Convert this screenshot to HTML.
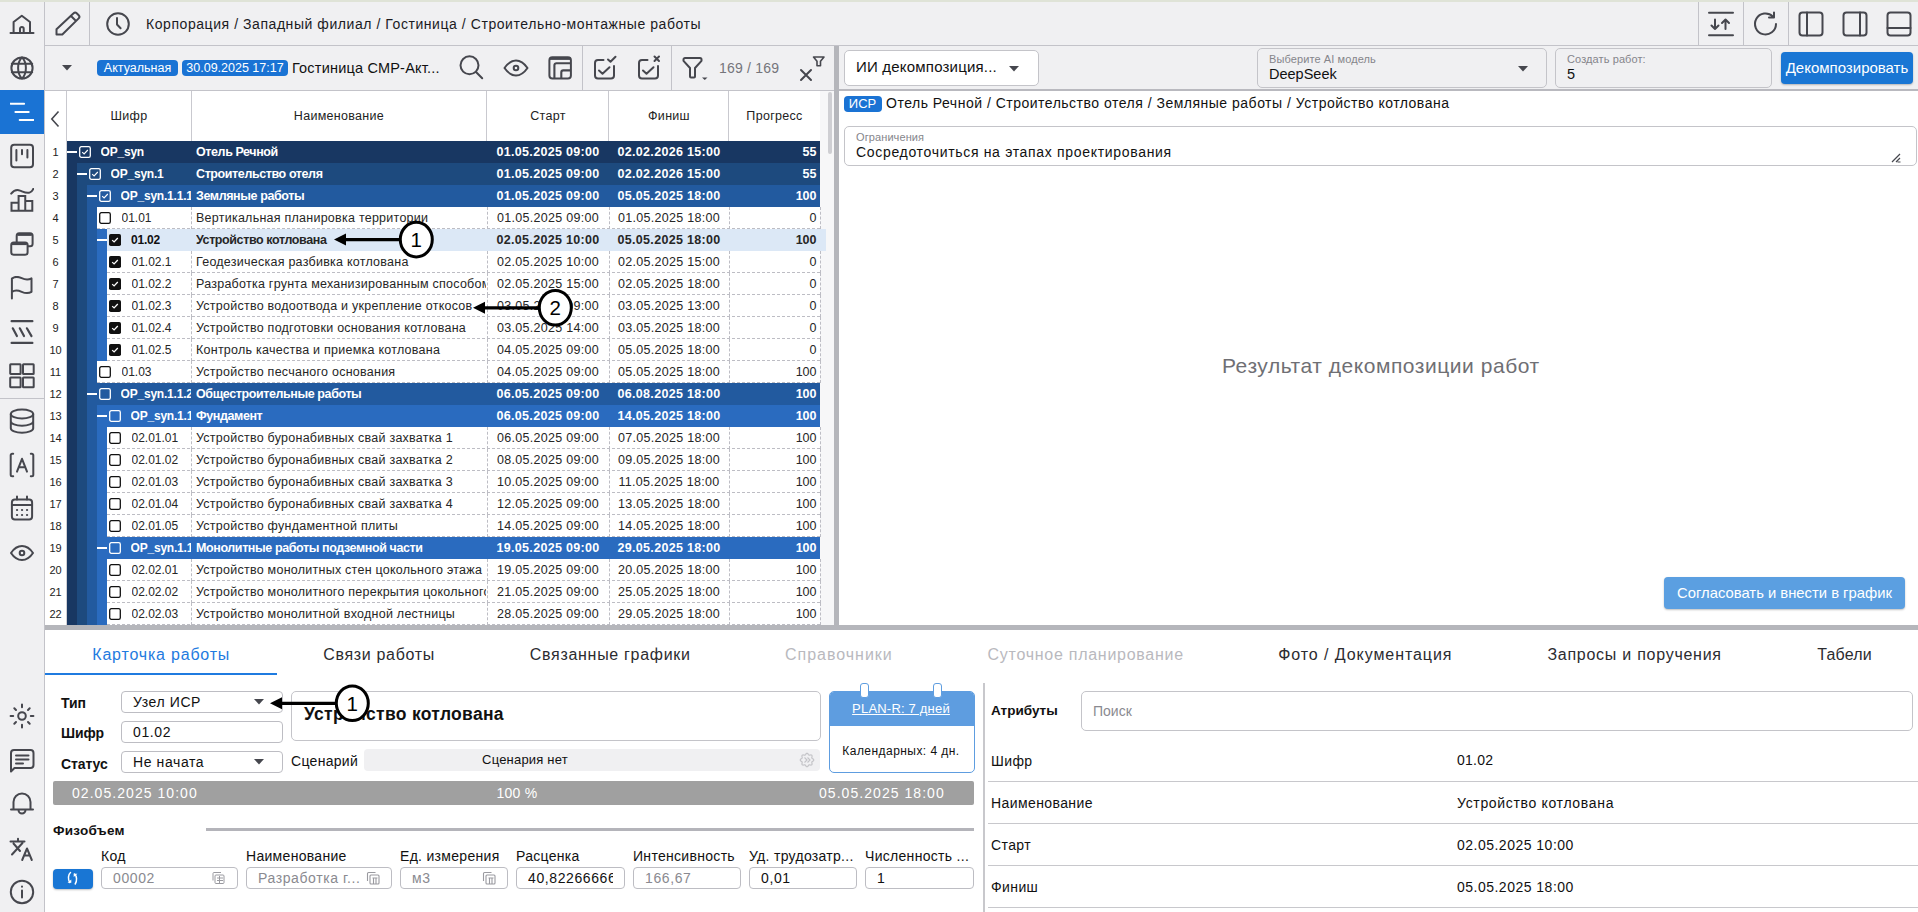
<!DOCTYPE html>
<html><head><meta charset="utf-8">
<style>
*{box-sizing:border-box;margin:0;padding:0}
html,body{width:1918px;height:912px;overflow:hidden;background:#f0f0f2;font-family:"Liberation Sans",sans-serif;color:#111}
.abs{position:absolute}
.t{white-space:nowrap;line-height:16px}
.b{font-weight:bold}
#topstrip{position:absolute;left:0;top:0;width:1918px;height:2px;background:#dfe3d7}
#side{position:absolute;left:0;top:2px;width:45px;height:910px;background:#f0f0f2;border-right:1px solid #c3c3c9}
#hdr{position:absolute;left:45px;top:2px;width:1873px;height:44px;border-bottom:1px solid #c3c3c9;background:#f0f0f2}
.vsep{position:absolute;width:1px;background:#c3c3c9}
.crumb{position:absolute;left:146px;top:16px;font-size:14px;letter-spacing:0.56px;color:#1b1b1f;white-space:nowrap}
#tb{position:absolute;left:45px;top:46px;width:789px;height:45px;border-bottom:1px solid #c3c3c9;background:#f0f0f2}
.badge{position:absolute;top:60px;height:16px;background:#1a73d4;color:#fff;border-radius:4px;font-size:12.5px;line-height:16px;text-align:center;white-space:nowrap}
#thead{position:absolute;left:45px;top:91px;width:789px;height:534px;background:#fff}
.th{position:absolute;top:91px;height:50px;line-height:50px;font-size:12.5px;text-align:center;color:#222;letter-spacing:0.3px}
.thb{position:absolute;top:91px;width:1px;height:50px;background:#c9c9cf}
.rn{position:absolute;left:45px;width:21px;height:22px;line-height:22px;font-size:11px;text-align:center;color:#222}
.stripe{position:absolute;width:10px;height:22px}
.row{position:absolute;height:22px}
.leaf{background:#fff;border-bottom:1px dashed #bdbdc4;color:#262626}
.sel{background:#dce8f6}
.dash{position:absolute;left:0;top:10px;width:10px;height:2px;background:#fff}
.cb{position:absolute;top:5px;width:12px;height:12px;line-height:0}
.code{position:absolute;top:0;height:22px;line-height:22px;font-size:12px;white-space:nowrap;overflow:hidden;letter-spacing:0}
.code.b{letter-spacing:-0.2px}
.grp .code{color:#fff}
.cell{position:absolute;height:22px;line-height:22px;font-size:12.5px;white-space:nowrap;overflow:hidden}
.nm.b{letter-spacing:-0.4px}
.vd{position:absolute;width:0;height:22px;border-left:1px dashed #bdbdc4}
.nm{left:196px;width:290px;letter-spacing:0.25px}
.st{left:487px;width:122px;text-align:center;letter-spacing:0.3px}
.fi{left:609px;width:120px;text-align:center;letter-spacing:0.3px}
.pr{left:729px;width:87.5px;text-align:right}
#split-v{position:absolute;left:834px;top:46px;width:5px;height:580px;background:#b5b6bb}
#split-h{position:absolute;left:45px;top:625px;width:1873px;height:5px;background:#b5b6bb}
#scroll{position:absolute;left:820px;top:91px;width:14px;height:534px;background:#f7f7f8}
#thumb{position:absolute;left:828px;top:92px;width:4px;height:62px;background:#cfcfd3;border-radius:2px}
#rtb{position:absolute;left:839px;top:46px;width:1079px;height:45px;background:#f0f0f2;border-bottom:2px solid #b9b9bf}
#rbody{position:absolute;left:839px;top:91px;width:1079px;height:534px;background:#fff}
.box{border:1px solid #c4c4c9;border-radius:5px}
.lbl{font-size:11px;color:#85858b;letter-spacing:0.1px}
.btn{background:#1976d4;color:#fff;border-radius:4px;text-align:center;white-space:nowrap;box-shadow:0 1px 2px rgba(0,0,0,.25)}
#bot{position:absolute;left:45px;top:630px;width:1873px;height:282px;background:#fff}
.tab{position:absolute;top:644.5px;height:20px;line-height:20px;font-size:16px;letter-spacing:0.55px;color:#2c2c30;white-space:nowrap}
.tab.act{color:#1f7be0}
.tab.dis{color:#b9b9be}
.inp{border:1px solid #bdbdc3;border-radius:4px;background:#fff;padding-left:11px;padding-right:11px;font-size:14px;white-space:nowrap;letter-spacing:0.6px;overflow:hidden}
.inp.gr{color:#8a8a90}
.hl{left:988px;width:930px;height:1px;background:#c8c8cc}
</style></head><body>
<div id="topstrip"></div>
<div id="side"></div>
<div class="abs" style="left:0;top:90px;width:44px;height:44px;background:#1a73d4"></div>
<div class="abs" style="left:0;top:398px;width:44px;height:1px;background:#c3c3c9"></div>
<svg class="abs" style="left:10.0px;top:10.0px;overflow:visible" width="24" height="24" viewBox="0 0 24 24" fill="none" stroke="#46474e" stroke-width="2" stroke-linecap="round" stroke-linejoin="round" ><path d="M0.5 23h23M3.6 23V12L11.8 5.8 20 12V23M10 23v-4.2a1.85 1.85 0 0 1 3.7 0V23"/></svg><svg class="abs" style="left:10.0px;top:55.8px;overflow:visible" width="24" height="24" viewBox="0 0 24 24" fill="none" stroke="#46474e" stroke-width="2" stroke-linecap="round" stroke-linejoin="round" ><circle cx="12" cy="12" r="10.6"/><path d="M12 1.4C6.8 6.5 6.8 17.5 12 22.6 17.2 17.5 17.2 6.5 12 1.4zM1.8 7.8h20.4M1.8 16.2h20.4"/></svg><svg class="abs" style="left:10px;top:100px" width="24" height="24" viewBox="0 0 24 24" fill="none" stroke="#fff" stroke-width="2" stroke-linecap="round"><path d="M0.5 3.7h13.6M5.4 11.9h13.3M9.7 19.9h13.6"/></svg><svg class="abs" style="left:10.0px;top:144.0px;overflow:visible" width="24" height="24" viewBox="0 0 24 24" fill="none" stroke="#46474e" stroke-width="2" stroke-linecap="round" stroke-linejoin="round" ><rect x="1.2" y="0.8" width="21.8" height="22.4" rx="3"/><path d="M6.4 6v10.5M12 6v4.2M17.4 6v7.5"/></svg><svg class="abs" style="left:10px;top:188px" width="24" height="24" viewBox="0 0 24 24" fill="none" stroke="#46474e" stroke-width="2" stroke-linecap="round" stroke-linejoin="round"><path d="M1.2 5.6C3.5 2.8 6.5 1.3 10 2.6S16.5 5.6 19.5 4.6 22.6 2 23.3 0.9"/><path d="M1.5 22.7V14.75h7.1M8.6 22.7V8.1h6.65V22.7M15.25 13h7.05V22.7M1.5 22.7h20.8" stroke-linejoin="miter" stroke-linecap="square"/></svg><svg class="abs" style="left:10px;top:232px" width="24" height="24" viewBox="0 0 24 24" fill="none" stroke="#46474e" stroke-width="2" stroke-linejoin="round"><rect x="6.7" y="1.3" width="15.9" height="12.9" rx="2.5"/><path d="M7.5 2.6h14.3" stroke-width="2.6"/><rect x="1.25" y="10.5" width="16.35" height="12.2" rx="2.5" fill="#f0f0f2"/><path d="M2 11.8h14.8" stroke-width="2.6"/></svg><svg class="abs" style="left:10px;top:276px" width="24" height="24" viewBox="0 0 24 24" fill="none" stroke="#46474e" stroke-width="2" stroke-linecap="round" stroke-linejoin="round"><path d="M1.9 22.6V2.6c3.2-2.6 6.5-2 9.8-0.4s6.6 2 9.8 0.2v13.4c-3.2 2-6.5 1.5-9.8 0s-6.6-2.4-9.8 0.2"/></svg><svg class="abs" style="left:10px;top:320px" width="24" height="24" viewBox="0 0 24 24" fill="none" stroke="#46474e" stroke-width="2.2" stroke-linecap="round"><path d="M1.6 1.2h20.8M1.6 22.9h20.8M2.8 8.3l4.1 7.8M9.8 8.3l4.2 7.8M16.9 8.3l4.6 7.8"/></svg><svg class="abs" style="left:10.0px;top:364.0px;overflow:visible" width="24" height="24" viewBox="0 0 24 24" fill="none" stroke="#46474e" stroke-width="2" stroke-linecap="round" stroke-linejoin="round" ><rect x="0.2" y="0.3" width="10.4" height="9.7" rx="0.5"/><rect x="13" y="0.3" width="10.7" height="9.7" rx="0.5"/><rect x="0.2" y="13.4" width="10.4" height="9.9" rx="0.5"/><rect x="13" y="13.4" width="10.7" height="9.9" rx="0.5"/></svg><svg class="abs" style="left:10.0px;top:409.2px;overflow:visible" width="24" height="24" viewBox="0 0 24 24" fill="none" stroke="#46474e" stroke-width="2" stroke-linecap="round" stroke-linejoin="round" ><ellipse cx="12" cy="5" rx="11.2" ry="4.5"/><path d="M0.8 5v14.2c0 2.5 5 4.5 11.2 4.5s11.2-2 11.2-4.5V5M0.8 12.2c0 2.5 5 4.5 11.2 4.5s11.2-2 11.2-4.5"/></svg><svg class="abs" style="left:10.0px;top:453.0px;overflow:visible" width="24" height="24" viewBox="0 0 24 24" fill="none" stroke="#46474e" stroke-width="2" stroke-linecap="round" stroke-linejoin="round" ><path d="M3.2 0.8H2.2a1.5 1.5 0 0 0-1.5 1.5v19.5a1.5 1.5 0 0 0 1.5 1.5h1M20.8 0.8h1a1.5 1.5 0 0 1 1.5 1.5v19.5a1.5 1.5 0 0 1-1.5 1.5h-1M7 18.6L12 5.8l5 12.8M8.6 14.3h6.8"/></svg><svg class="abs" style="left:10.0px;top:497.0px;overflow:visible" width="24" height="24" viewBox="0 0 24 24" fill="none" stroke="#46474e" stroke-width="2" stroke-linecap="round" stroke-linejoin="round" ><rect x="1.9" y="2.6" width="20.2" height="19.9" rx="3"/><path d="M1.9 8h20.2M7 -0.5v3M17 -0.5v3"/><g stroke-width="2.2"><path d="M7 13h.1M12 13h.1M17 13h.1M7 18h.1M12 18h.1M17 18h.1"/></g></svg><svg class="abs" style="left:10.0px;top:540.8px;overflow:visible" width="24" height="24" viewBox="0 0 24 24" fill="none" stroke="#46474e" stroke-width="2" stroke-linecap="round" stroke-linejoin="round" ><path d="M1 12C4.3 7 8 5 12 5s7.7 2 11 7c-3.3 5-7 7-11 7S4.3 17 1 12z"/><circle cx="12" cy="12" r="2.3"/></svg><svg class="abs" style="left:10.0px;top:704.0px;overflow:visible" width="24" height="24" viewBox="0 0 24 24" fill="none" stroke="#46474e" stroke-width="2" stroke-linecap="round" stroke-linejoin="round" stroke-width="2"><circle cx="12" cy="12" r="3.8"/><path d="M12 0.6v2.6M12 20.8v2.6M0.6 12h2.6M20.8 12h2.6M4.3 4.3l1.7 1.7M18 18l1.7 1.7M4.3 19.7l1.7-1.7M18 6l1.7-1.7"/></svg><svg class="abs" style="left:10.0px;top:748.5px;overflow:visible" width="24" height="24" viewBox="0 0 24 24" fill="none" stroke="#46474e" stroke-width="2" stroke-linecap="round" stroke-linejoin="round" ><path d="M1 21.5V4a3 3 0 0 1 3-3h16.5a3 3 0 0 1 3 3v12a3 3 0 0 1-3 3H4.5L1 22.5z"/><path d="M6 6.5h12.5M6 10.5h12.5M6 14.5h7"/></svg><svg class="abs" style="left:10.0px;top:791.0px;overflow:visible" width="24" height="24" viewBox="0 0 24 24" fill="none" stroke="#46474e" stroke-width="2" stroke-linecap="round" stroke-linejoin="round" ><path d="M3.5 17.5V11a8.5 8.5 0 0 1 17 0v6.5M1 18.5h22M8.5 19a3.5 3.5 0 0 0 7 0"/></svg><svg class="abs" style="left:10.0px;top:838.0px;overflow:visible" width="24" height="24" viewBox="0 0 24 24" fill="none" stroke="#46474e" stroke-width="2" stroke-linecap="round" stroke-linejoin="round" ><path d="M0.5 3.5h14M8 0.8v2.7M3.5 5.5l6.5 7.5M12.5 5L2 16.5M12.2 22l4.8-11.5 4.8 11.5M14 17.6h6"/></svg><svg class="abs" style="left:10.0px;top:880.0px;overflow:visible" width="24" height="24" viewBox="0 0 24 24" fill="none" stroke="#46474e" stroke-width="2" stroke-linecap="round" stroke-linejoin="round" ><circle cx="12" cy="12" r="11.2"/><path d="M12 10.5v7M12 6.5v.2"/></svg>
<div id="hdr"></div>
<div class="vsep" style="left:89px;top:2px;height:44px"></div>
<div class="vsep" style="left:1698px;top:2px;height:44px"></div>
<div class="vsep" style="left:1743px;top:2px;height:44px"></div>
<div class="vsep" style="left:1788px;top:2px;height:44px"></div>
<svg class="abs" style="left:56.5px;top:11.3px;overflow:visible" width="24" height="24" viewBox="0 0 24 24" fill="none" stroke="#46474e" stroke-width="2" stroke-linecap="round" stroke-linejoin="round" ><path d="M-0.5 23.5v-5.3L16.6 2.3a2.2 2.2 0 0 1 3.1 0l2 2a2.2 2.2 0 0 1 0 3.1L5.3 23.5zM14 5l4.8 4.8"/></svg><svg class="abs" style="left:106.0px;top:12.0px;overflow:visible" width="24" height="24" viewBox="0 0 24 24" fill="none" stroke="#46474e" stroke-width="2" stroke-linecap="round" stroke-linejoin="round" ><circle cx="12" cy="12" r="10.8"/><path d="M11 6v6.5l3.6 3.8"/></svg><svg class="abs" style="left:1709.0px;top:12.0px;overflow:visible" width="24" height="24" viewBox="0 0 24 24" fill="none" stroke="#46474e" stroke-width="2" stroke-linecap="round" stroke-linejoin="round" stroke-width="1.9"><path d="M0 0.8h24M0 23.2h24M6 7.5v9.5M2.5 13.5L6 17l3.5-3.5M16.5 17V7.5M13 11l3.5-3.5L20 11"/></svg><svg class="abs" style="left:1754.0px;top:12.0px;overflow:visible" width="24" height="24" viewBox="0 0 24 24" fill="none" stroke="#46474e" stroke-width="2" stroke-linecap="round" stroke-linejoin="round" ><path d="M22 12a10.5 10.5 0 1 1-3.2-7.6M20 0.5v5h-5"/></svg><svg class="abs" style="left:1799.0px;top:12.0px;overflow:visible" width="24" height="24" viewBox="0 0 24 24" fill="none" stroke="#46474e" stroke-width="2" stroke-linecap="round" stroke-linejoin="round" ><rect x="0.5" y="0.5" width="23" height="23" rx="3"/><path d="M8 0.5v23"/></svg><svg class="abs" style="left:1843.0px;top:12.0px;overflow:visible" width="24" height="24" viewBox="0 0 24 24" fill="none" stroke="#46474e" stroke-width="2" stroke-linecap="round" stroke-linejoin="round" ><rect x="0.5" y="0.5" width="23" height="23" rx="3"/><path d="M17 0.5v23"/></svg><svg class="abs" style="left:1887.0px;top:12.0px;overflow:visible" width="24" height="24" viewBox="0 0 24 24" fill="none" stroke="#46474e" stroke-width="2" stroke-linecap="round" stroke-linejoin="round" ><rect x="0.5" y="0.5" width="23" height="23" rx="3"/><path d="M0.5 16h23"/></svg>
<div class="crumb">Корпорация / Западный филиал / Гостиница / Строительно-монтажные работы</div>
<div id="tb"></div>
<div class="vsep" style="left:582px;top:46px;height:44px"></div>
<div class="vsep" style="left:671px;top:46px;height:44px"></div>
<div class="badge" style="left:97px;width:81px">Актуальная</div>
<div class="badge" style="left:182px;width:106px">30.09.2025 17:17</div>
<div class="t abs" style="left:292px;top:60px;font-size:14.5px;letter-spacing:0.2px">Гостиница СМР-Акт...</div>
<div class="t abs" style="left:719px;top:60px;font-size:14px;letter-spacing:0.2px;color:#75757b">169 / 169</div>
<svg class="abs" style="left:62px;top:65px" width="10" height="6" viewBox="0 0 10 6"><path d="M0 0h10L5 5.5z" fill="#46474e"/></svg><svg class="abs" style="left:460.0px;top:56.0px;overflow:visible" width="24" height="24" viewBox="0 0 24 24" fill="none" stroke="#46474e" stroke-width="2" stroke-linecap="round" stroke-linejoin="round" ><circle cx="9.5" cy="9.3" r="9"/><path d="M16 16l6.2 6.3"/></svg><svg class="abs" style="left:504.0px;top:56.0px;overflow:visible" width="24" height="24" viewBox="0 0 24 24" fill="none" stroke="#46474e" stroke-width="2" stroke-linecap="round" stroke-linejoin="round" stroke-width="1.8"><path d="M0.5 12C4 7 8 4.5 12 4.5s8 2.5 11.5 7.5c-3.5 5-7.5 7.5-11.5 7.5S4 17 0.5 12z"/><circle cx="12" cy="12" r="2.3"/></svg><svg class="abs" style="left:548px;top:56px" width="24" height="24" viewBox="0 0 24 24" fill="none" stroke="#46474e" stroke-linecap="butt" stroke-linejoin="round"><rect x="1.4" y="1.25" width="21.5" height="21.15" rx="3" stroke-width="2"/><path d="M2 2.6H22.3" stroke-width="2.6"/><path d="M6.4 22.4V9.2a2 2 0 0 1 2-2H22.9M13.3 22.4V16.4a2 2 0 0 1 2-2H22.9" stroke-width="2.1"/></svg><svg class="abs" style="left:592.0px;top:56.0px;overflow:visible" width="24" height="24" viewBox="0 0 24 24" fill="none" stroke="#46474e" stroke-width="2" stroke-linecap="round" stroke-linejoin="round" ><path d="M11.5 4H6a3 3 0 0 0-3 3v12.5a3 3 0 0 0 3 3h13a3 3 0 0 0 3-3V10M7 14.5l3.5 3.2 7-6.5M16 3.5l2.5 2.3L23.5 0.8"/></svg><svg class="abs" style="left:636.0px;top:56.0px;overflow:visible" width="24" height="24" viewBox="0 0 24 24" fill="none" stroke="#46474e" stroke-width="2" stroke-linecap="round" stroke-linejoin="round" ><path d="M11.5 4H6a3 3 0 0 0-3 3v12.5a3 3 0 0 0 3 3h13a3 3 0 0 0 3-3V10M7 14.5l3.5 3.2 7-6.5M18.5 0.5l4.5 4.5M23 0.5l-4.5 4.5"/></svg><svg class="abs" style="left:682.0px;top:57.0px;overflow:visible" width="24" height="24" viewBox="0 0 24 24" fill="none" stroke="#46474e" stroke-width="2" stroke-linecap="round" stroke-linejoin="round" stroke-width="2"><path d="M1.5 2.5a1.5 1.5 0 0 1 1.5-1.5h15a1.5 1.5 0 0 1 1.5 1.5v1.3L13 11v8.5a1 1 0 0 1-1 1H9a1 1 0 0 1-1-1V11L1.5 3.8z"/><path d="M20 20.5h5.5l-2.75 2.5z" fill="#46474e" stroke="none"/></svg><svg class="abs" style="left:810.5px;top:68.5px;overflow:visible" width="24" height="24" viewBox="0 0 24 24" fill="none" stroke="#46474e" stroke-width="2" stroke-linecap="round" stroke-linejoin="round" stroke-width="2.1"><path d="M-10 1l10 10M0 1l-10 10"/><path d="M2.5 -12h10.5l-3.5 4.3v4.5h-3.5v-4.5z" stroke-width="1.6"/></svg>
<div id="thead"></div>
<div class="thb" style="left:66px"></div>
<div class="thb" style="left:191px"></div>
<div class="thb" style="left:486px"></div>
<div class="thb" style="left:608px"></div>
<div class="thb" style="left:728px"></div>
<div class="thb" style="left:820px"></div>
<div class="abs" style="left:820px;top:140px;width:7px;height:1px;background:#d5d5da"></div>
<div class="abs" style="left:66px;top:141px;width:1px;height:484px;background:#d0d0d5"></div>
<svg class="abs" style="left:50px;top:109.5px" width="10" height="18" viewBox="0 0 10 18"><path d="M8.5 1.5L1.8 9l6.7 7.5" fill="none" stroke="#46474e" stroke-width="1.6"/></svg>
<div class="th" style="left:67px;width:124px">Шифр</div>
<div class="th" style="left:191px;width:296px">Наименование</div>
<div class="th" style="left:487px;width:122px">Старт</div>
<div class="th" style="left:609px;width:120px">Финиш</div>
<div class="th" style="left:729px;width:91px">Прогресс</div>
<div id="scroll"></div><div id="thumb"></div>
<div class="rn" style="top:141px">1</div>
<div class="row grp" style="left:67px;top:141px;width:753px;background:#183762">
<div class="dash"></div>
<div class="cb" style="left:12px"><svg width="12" height="12" viewBox="0 0 12 12"><rect x="0.7" y="0.7" width="10.6" height="10.6" rx="1.6" fill="none" stroke="#fff" stroke-width="1.3"/><path d="M3.2 6.1 L5.1 7.9 L8.8 4" fill="none" stroke="#fff" stroke-width="1.1"/></svg></div>
<div class="code b" style="left:33.5px;width:90.5px">OP_syn</div>
</div>
<div class="cell nm b" style="top:141px;color:#fff">Отель Речной</div>
<div class="cell st b" style="top:141px;color:#fff">01.05.2025 09:00</div>
<div class="cell fi b" style="top:141px;color:#fff">02.02.2026 15:00</div>
<div class="cell pr b" style="top:141px;color:#fff">55</div>
<div class="rn" style="top:163px">2</div>
<div class="stripe" style="left:67px;top:163px;background:#183762"></div>
<div class="row grp" style="left:77px;top:163px;width:743px;background:#1d4a7e">
<div class="dash"></div>
<div class="cb" style="left:12px"><svg width="12" height="12" viewBox="0 0 12 12"><rect x="0.7" y="0.7" width="10.6" height="10.6" rx="1.6" fill="none" stroke="#fff" stroke-width="1.3"/><path d="M3.2 6.1 L5.1 7.9 L8.8 4" fill="none" stroke="#fff" stroke-width="1.1"/></svg></div>
<div class="code b" style="left:33.5px;width:80.5px">OP_syn.1</div>
</div>
<div class="cell nm b" style="top:163px;color:#fff">Строительство отеля</div>
<div class="cell st b" style="top:163px;color:#fff">01.05.2025 09:00</div>
<div class="cell fi b" style="top:163px;color:#fff">02.02.2026 15:00</div>
<div class="cell pr b" style="top:163px;color:#fff">55</div>
<div class="rn" style="top:185px">3</div>
<div class="stripe" style="left:67px;top:185px;background:#183762"></div>
<div class="stripe" style="left:77px;top:185px;background:#1d4a7e"></div>
<div class="row grp" style="left:87px;top:185px;width:733px;background:#225a9f">
<div class="dash"></div>
<div class="cb" style="left:12px"><svg width="12" height="12" viewBox="0 0 12 12"><rect x="0.7" y="0.7" width="10.6" height="10.6" rx="1.6" fill="none" stroke="#fff" stroke-width="1.3"/><path d="M3.2 6.1 L5.1 7.9 L8.8 4" fill="none" stroke="#fff" stroke-width="1.1"/></svg></div>
<div class="code b" style="left:33.5px;width:70.5px">OP_syn.1.1.1</div>
</div>
<div class="cell nm b" style="top:185px;color:#fff">Земляные работы</div>
<div class="cell st b" style="top:185px;color:#fff">01.05.2025 09:00</div>
<div class="cell fi b" style="top:185px;color:#fff">05.05.2025 18:00</div>
<div class="cell pr b" style="top:185px;color:#fff">100</div>
<div class="rn" style="top:207px">4</div>
<div class="stripe" style="left:67px;top:207px;background:#183762"></div>
<div class="stripe" style="left:77px;top:207px;background:#1d4a7e"></div>
<div class="stripe" style="left:87px;top:207px;background:#225a9f"></div>
<div class="row leaf" style="left:97px;top:207px;width:723px">
<div class="cb" style="left:2px"><svg width="12" height="12" viewBox="0 0 12 12"><rect x="0.7" y="0.7" width="10.6" height="10.6" rx="1.6" fill="none" stroke="#111" stroke-width="1.3"/></svg></div>
<div class="code" style="left:24.5px;width:69.5px">01.01</div>
</div>
<div class="vd" style="left:191px;top:207px"></div>
<div class="vd" style="left:487px;top:207px"></div>
<div class="vd" style="left:609px;top:207px"></div>
<div class="vd" style="left:729px;top:207px"></div>
<div class="vd" style="left:820px;top:207px"></div>
<div class="cell nm " style="top:207px;color:#262626">Вертикальная планировка территории</div>
<div class="cell st " style="top:207px;color:#262626">01.05.2025 09:00</div>
<div class="cell fi " style="top:207px;color:#262626">01.05.2025 18:00</div>
<div class="cell pr " style="top:207px;color:#262626">0</div>
<div class="rn" style="top:229px">5</div>
<div class="stripe" style="left:67px;top:229px;background:#183762"></div>
<div class="stripe" style="left:77px;top:229px;background:#1d4a7e"></div>
<div class="stripe" style="left:87px;top:229px;background:#225a9f"></div>
<div class="stripe" style="left:97px;top:229px;background:#2a6bbf"></div>
<div class="dash" style="left:97px;top:239px"></div>
<div class="row sel" style="left:107px;top:229px;width:719px">
<div class="cb" style="left:2px"><svg width="12" height="12" viewBox="0 0 12 12"><rect x="0" y="0" width="12" height="12" rx="1.8" fill="#111"/><path d="M3.2 6.1 L5.1 7.9 L8.8 4" fill="none" stroke="#fff" stroke-width="1.3"/></svg></div>
<div class="code b" style="left:24px">01.02</div>
</div>
<div class="cell nm b" style="top:229px;color:#262626">Устройство котлована</div>
<div class="cell st b" style="top:229px;color:#262626">02.05.2025 10:00</div>
<div class="cell fi b" style="top:229px;color:#262626">05.05.2025 18:00</div>
<div class="cell pr b" style="top:229px;color:#262626">100</div>
<div class="rn" style="top:251px">6</div>
<div class="stripe" style="left:67px;top:251px;background:#183762"></div>
<div class="stripe" style="left:77px;top:251px;background:#1d4a7e"></div>
<div class="stripe" style="left:87px;top:251px;background:#225a9f"></div>
<div class="stripe" style="left:97px;top:251px;background:#2a6bbf"></div>
<div class="row leaf" style="left:107px;top:251px;width:713px">
<div class="cb" style="left:2px"><svg width="12" height="12" viewBox="0 0 12 12"><rect x="0" y="0" width="12" height="12" rx="1.8" fill="#111"/><path d="M3.2 6.1 L5.1 7.9 L8.8 4" fill="none" stroke="#fff" stroke-width="1.3"/></svg></div>
<div class="code" style="left:24.5px;width:59.5px">01.02.1</div>
</div>
<div class="vd" style="left:191px;top:251px"></div>
<div class="vd" style="left:487px;top:251px"></div>
<div class="vd" style="left:609px;top:251px"></div>
<div class="vd" style="left:729px;top:251px"></div>
<div class="vd" style="left:820px;top:251px"></div>
<div class="cell nm " style="top:251px;color:#262626">Геодезическая разбивка котлована</div>
<div class="cell st " style="top:251px;color:#262626">02.05.2025 10:00</div>
<div class="cell fi " style="top:251px;color:#262626">02.05.2025 15:00</div>
<div class="cell pr " style="top:251px;color:#262626">0</div>
<div class="rn" style="top:273px">7</div>
<div class="stripe" style="left:67px;top:273px;background:#183762"></div>
<div class="stripe" style="left:77px;top:273px;background:#1d4a7e"></div>
<div class="stripe" style="left:87px;top:273px;background:#225a9f"></div>
<div class="stripe" style="left:97px;top:273px;background:#2a6bbf"></div>
<div class="row leaf" style="left:107px;top:273px;width:713px">
<div class="cb" style="left:2px"><svg width="12" height="12" viewBox="0 0 12 12"><rect x="0" y="0" width="12" height="12" rx="1.8" fill="#111"/><path d="M3.2 6.1 L5.1 7.9 L8.8 4" fill="none" stroke="#fff" stroke-width="1.3"/></svg></div>
<div class="code" style="left:24.5px;width:59.5px">01.02.2</div>
</div>
<div class="vd" style="left:191px;top:273px"></div>
<div class="vd" style="left:487px;top:273px"></div>
<div class="vd" style="left:609px;top:273px"></div>
<div class="vd" style="left:729px;top:273px"></div>
<div class="vd" style="left:820px;top:273px"></div>
<div class="cell nm " style="top:273px;color:#262626">Разработка грунта механизированным способом</div>
<div class="cell st " style="top:273px;color:#262626">02.05.2025 15:00</div>
<div class="cell fi " style="top:273px;color:#262626">02.05.2025 18:00</div>
<div class="cell pr " style="top:273px;color:#262626">0</div>
<div class="rn" style="top:295px">8</div>
<div class="stripe" style="left:67px;top:295px;background:#183762"></div>
<div class="stripe" style="left:77px;top:295px;background:#1d4a7e"></div>
<div class="stripe" style="left:87px;top:295px;background:#225a9f"></div>
<div class="stripe" style="left:97px;top:295px;background:#2a6bbf"></div>
<div class="row leaf" style="left:107px;top:295px;width:713px">
<div class="cb" style="left:2px"><svg width="12" height="12" viewBox="0 0 12 12"><rect x="0" y="0" width="12" height="12" rx="1.8" fill="#111"/><path d="M3.2 6.1 L5.1 7.9 L8.8 4" fill="none" stroke="#fff" stroke-width="1.3"/></svg></div>
<div class="code" style="left:24.5px;width:59.5px">01.02.3</div>
</div>
<div class="vd" style="left:191px;top:295px"></div>
<div class="vd" style="left:487px;top:295px"></div>
<div class="vd" style="left:609px;top:295px"></div>
<div class="vd" style="left:729px;top:295px"></div>
<div class="vd" style="left:820px;top:295px"></div>
<div class="cell nm " style="top:295px;color:#262626">Устройство водоотвода и укрепление откосов</div>
<div class="cell st " style="top:295px;color:#262626">03.05.2025 09:00</div>
<div class="cell fi " style="top:295px;color:#262626">03.05.2025 13:00</div>
<div class="cell pr " style="top:295px;color:#262626">0</div>
<div class="rn" style="top:317px">9</div>
<div class="stripe" style="left:67px;top:317px;background:#183762"></div>
<div class="stripe" style="left:77px;top:317px;background:#1d4a7e"></div>
<div class="stripe" style="left:87px;top:317px;background:#225a9f"></div>
<div class="stripe" style="left:97px;top:317px;background:#2a6bbf"></div>
<div class="row leaf" style="left:107px;top:317px;width:713px">
<div class="cb" style="left:2px"><svg width="12" height="12" viewBox="0 0 12 12"><rect x="0" y="0" width="12" height="12" rx="1.8" fill="#111"/><path d="M3.2 6.1 L5.1 7.9 L8.8 4" fill="none" stroke="#fff" stroke-width="1.3"/></svg></div>
<div class="code" style="left:24.5px;width:59.5px">01.02.4</div>
</div>
<div class="vd" style="left:191px;top:317px"></div>
<div class="vd" style="left:487px;top:317px"></div>
<div class="vd" style="left:609px;top:317px"></div>
<div class="vd" style="left:729px;top:317px"></div>
<div class="vd" style="left:820px;top:317px"></div>
<div class="cell nm " style="top:317px;color:#262626">Устройство подготовки основания котлована</div>
<div class="cell st " style="top:317px;color:#262626">03.05.2025 14:00</div>
<div class="cell fi " style="top:317px;color:#262626">03.05.2025 18:00</div>
<div class="cell pr " style="top:317px;color:#262626">0</div>
<div class="rn" style="top:339px">10</div>
<div class="stripe" style="left:67px;top:339px;background:#183762"></div>
<div class="stripe" style="left:77px;top:339px;background:#1d4a7e"></div>
<div class="stripe" style="left:87px;top:339px;background:#225a9f"></div>
<div class="stripe" style="left:97px;top:339px;background:#2a6bbf"></div>
<div class="row leaf" style="left:107px;top:339px;width:713px">
<div class="cb" style="left:2px"><svg width="12" height="12" viewBox="0 0 12 12"><rect x="0" y="0" width="12" height="12" rx="1.8" fill="#111"/><path d="M3.2 6.1 L5.1 7.9 L8.8 4" fill="none" stroke="#fff" stroke-width="1.3"/></svg></div>
<div class="code" style="left:24.5px;width:59.5px">01.02.5</div>
</div>
<div class="vd" style="left:191px;top:339px"></div>
<div class="vd" style="left:487px;top:339px"></div>
<div class="vd" style="left:609px;top:339px"></div>
<div class="vd" style="left:729px;top:339px"></div>
<div class="vd" style="left:820px;top:339px"></div>
<div class="cell nm " style="top:339px;color:#262626">Контроль качества и приемка котлована</div>
<div class="cell st " style="top:339px;color:#262626">04.05.2025 09:00</div>
<div class="cell fi " style="top:339px;color:#262626">05.05.2025 18:00</div>
<div class="cell pr " style="top:339px;color:#262626">0</div>
<div class="rn" style="top:361px">11</div>
<div class="stripe" style="left:67px;top:361px;background:#183762"></div>
<div class="stripe" style="left:77px;top:361px;background:#1d4a7e"></div>
<div class="stripe" style="left:87px;top:361px;background:#225a9f"></div>
<div class="row leaf" style="left:97px;top:361px;width:723px">
<div class="cb" style="left:2px"><svg width="12" height="12" viewBox="0 0 12 12"><rect x="0.7" y="0.7" width="10.6" height="10.6" rx="1.6" fill="none" stroke="#111" stroke-width="1.3"/></svg></div>
<div class="code" style="left:24.5px;width:69.5px">01.03</div>
</div>
<div class="vd" style="left:191px;top:361px"></div>
<div class="vd" style="left:487px;top:361px"></div>
<div class="vd" style="left:609px;top:361px"></div>
<div class="vd" style="left:729px;top:361px"></div>
<div class="vd" style="left:820px;top:361px"></div>
<div class="cell nm " style="top:361px;color:#262626">Устройство песчаного основания</div>
<div class="cell st " style="top:361px;color:#262626">04.05.2025 09:00</div>
<div class="cell fi " style="top:361px;color:#262626">05.05.2025 18:00</div>
<div class="cell pr " style="top:361px;color:#262626">100</div>
<div class="rn" style="top:383px">12</div>
<div class="stripe" style="left:67px;top:383px;background:#183762"></div>
<div class="stripe" style="left:77px;top:383px;background:#1d4a7e"></div>
<div class="row grp" style="left:87px;top:383px;width:733px;background:#225a9f">
<div class="dash"></div>
<div class="cb" style="left:12px"><svg width="12" height="12" viewBox="0 0 12 12"><rect x="0.7" y="0.7" width="10.6" height="10.6" rx="1.6" fill="none" stroke="#fff" stroke-width="1.3"/></svg></div>
<div class="code b" style="left:33.5px;width:70.5px">OP_syn.1.1.2</div>
</div>
<div class="cell nm b" style="top:383px;color:#fff">Общестроительные работы</div>
<div class="cell st b" style="top:383px;color:#fff">06.05.2025 09:00</div>
<div class="cell fi b" style="top:383px;color:#fff">06.08.2025 18:00</div>
<div class="cell pr b" style="top:383px;color:#fff">100</div>
<div class="rn" style="top:405px">13</div>
<div class="stripe" style="left:67px;top:405px;background:#183762"></div>
<div class="stripe" style="left:77px;top:405px;background:#1d4a7e"></div>
<div class="stripe" style="left:87px;top:405px;background:#225a9f"></div>
<div class="row grp" style="left:97px;top:405px;width:723px;background:#2a6bbf">
<div class="dash"></div>
<div class="cb" style="left:12px"><svg width="12" height="12" viewBox="0 0 12 12"><rect x="0.7" y="0.7" width="10.6" height="10.6" rx="1.6" fill="none" stroke="#fff" stroke-width="1.3"/></svg></div>
<div class="code b" style="left:33.5px;width:60.5px">OP_syn.1.1.2.1</div>
</div>
<div class="cell nm b" style="top:405px;color:#fff">Фундамент</div>
<div class="cell st b" style="top:405px;color:#fff">06.05.2025 09:00</div>
<div class="cell fi b" style="top:405px;color:#fff">14.05.2025 18:00</div>
<div class="cell pr b" style="top:405px;color:#fff">100</div>
<div class="rn" style="top:427px">14</div>
<div class="stripe" style="left:67px;top:427px;background:#183762"></div>
<div class="stripe" style="left:77px;top:427px;background:#1d4a7e"></div>
<div class="stripe" style="left:87px;top:427px;background:#225a9f"></div>
<div class="stripe" style="left:97px;top:427px;background:#2a6bbf"></div>
<div class="row leaf" style="left:107px;top:427px;width:713px">
<div class="cb" style="left:2px"><svg width="12" height="12" viewBox="0 0 12 12"><rect x="0.7" y="0.7" width="10.6" height="10.6" rx="1.6" fill="none" stroke="#111" stroke-width="1.3"/></svg></div>
<div class="code" style="left:24.5px;width:59.5px">02.01.01</div>
</div>
<div class="vd" style="left:191px;top:427px"></div>
<div class="vd" style="left:487px;top:427px"></div>
<div class="vd" style="left:609px;top:427px"></div>
<div class="vd" style="left:729px;top:427px"></div>
<div class="vd" style="left:820px;top:427px"></div>
<div class="cell nm " style="top:427px;color:#262626">Устройство буронабивных свай захватка 1</div>
<div class="cell st " style="top:427px;color:#262626">06.05.2025 09:00</div>
<div class="cell fi " style="top:427px;color:#262626">07.05.2025 18:00</div>
<div class="cell pr " style="top:427px;color:#262626">100</div>
<div class="rn" style="top:449px">15</div>
<div class="stripe" style="left:67px;top:449px;background:#183762"></div>
<div class="stripe" style="left:77px;top:449px;background:#1d4a7e"></div>
<div class="stripe" style="left:87px;top:449px;background:#225a9f"></div>
<div class="stripe" style="left:97px;top:449px;background:#2a6bbf"></div>
<div class="row leaf" style="left:107px;top:449px;width:713px">
<div class="cb" style="left:2px"><svg width="12" height="12" viewBox="0 0 12 12"><rect x="0.7" y="0.7" width="10.6" height="10.6" rx="1.6" fill="none" stroke="#111" stroke-width="1.3"/></svg></div>
<div class="code" style="left:24.5px;width:59.5px">02.01.02</div>
</div>
<div class="vd" style="left:191px;top:449px"></div>
<div class="vd" style="left:487px;top:449px"></div>
<div class="vd" style="left:609px;top:449px"></div>
<div class="vd" style="left:729px;top:449px"></div>
<div class="vd" style="left:820px;top:449px"></div>
<div class="cell nm " style="top:449px;color:#262626">Устройство буронабивных свай захватка 2</div>
<div class="cell st " style="top:449px;color:#262626">08.05.2025 09:00</div>
<div class="cell fi " style="top:449px;color:#262626">09.05.2025 18:00</div>
<div class="cell pr " style="top:449px;color:#262626">100</div>
<div class="rn" style="top:471px">16</div>
<div class="stripe" style="left:67px;top:471px;background:#183762"></div>
<div class="stripe" style="left:77px;top:471px;background:#1d4a7e"></div>
<div class="stripe" style="left:87px;top:471px;background:#225a9f"></div>
<div class="stripe" style="left:97px;top:471px;background:#2a6bbf"></div>
<div class="row leaf" style="left:107px;top:471px;width:713px">
<div class="cb" style="left:2px"><svg width="12" height="12" viewBox="0 0 12 12"><rect x="0.7" y="0.7" width="10.6" height="10.6" rx="1.6" fill="none" stroke="#111" stroke-width="1.3"/></svg></div>
<div class="code" style="left:24.5px;width:59.5px">02.01.03</div>
</div>
<div class="vd" style="left:191px;top:471px"></div>
<div class="vd" style="left:487px;top:471px"></div>
<div class="vd" style="left:609px;top:471px"></div>
<div class="vd" style="left:729px;top:471px"></div>
<div class="vd" style="left:820px;top:471px"></div>
<div class="cell nm " style="top:471px;color:#262626">Устройство буронабивных свай захватка 3</div>
<div class="cell st " style="top:471px;color:#262626">10.05.2025 09:00</div>
<div class="cell fi " style="top:471px;color:#262626">11.05.2025 18:00</div>
<div class="cell pr " style="top:471px;color:#262626">100</div>
<div class="rn" style="top:493px">17</div>
<div class="stripe" style="left:67px;top:493px;background:#183762"></div>
<div class="stripe" style="left:77px;top:493px;background:#1d4a7e"></div>
<div class="stripe" style="left:87px;top:493px;background:#225a9f"></div>
<div class="stripe" style="left:97px;top:493px;background:#2a6bbf"></div>
<div class="row leaf" style="left:107px;top:493px;width:713px">
<div class="cb" style="left:2px"><svg width="12" height="12" viewBox="0 0 12 12"><rect x="0.7" y="0.7" width="10.6" height="10.6" rx="1.6" fill="none" stroke="#111" stroke-width="1.3"/></svg></div>
<div class="code" style="left:24.5px;width:59.5px">02.01.04</div>
</div>
<div class="vd" style="left:191px;top:493px"></div>
<div class="vd" style="left:487px;top:493px"></div>
<div class="vd" style="left:609px;top:493px"></div>
<div class="vd" style="left:729px;top:493px"></div>
<div class="vd" style="left:820px;top:493px"></div>
<div class="cell nm " style="top:493px;color:#262626">Устройство буронабивных свай захватка 4</div>
<div class="cell st " style="top:493px;color:#262626">12.05.2025 09:00</div>
<div class="cell fi " style="top:493px;color:#262626">13.05.2025 18:00</div>
<div class="cell pr " style="top:493px;color:#262626">100</div>
<div class="rn" style="top:515px">18</div>
<div class="stripe" style="left:67px;top:515px;background:#183762"></div>
<div class="stripe" style="left:77px;top:515px;background:#1d4a7e"></div>
<div class="stripe" style="left:87px;top:515px;background:#225a9f"></div>
<div class="stripe" style="left:97px;top:515px;background:#2a6bbf"></div>
<div class="row leaf" style="left:107px;top:515px;width:713px">
<div class="cb" style="left:2px"><svg width="12" height="12" viewBox="0 0 12 12"><rect x="0.7" y="0.7" width="10.6" height="10.6" rx="1.6" fill="none" stroke="#111" stroke-width="1.3"/></svg></div>
<div class="code" style="left:24.5px;width:59.5px">02.01.05</div>
</div>
<div class="vd" style="left:191px;top:515px"></div>
<div class="vd" style="left:487px;top:515px"></div>
<div class="vd" style="left:609px;top:515px"></div>
<div class="vd" style="left:729px;top:515px"></div>
<div class="vd" style="left:820px;top:515px"></div>
<div class="cell nm " style="top:515px;color:#262626">Устройство фундаментной плиты</div>
<div class="cell st " style="top:515px;color:#262626">14.05.2025 09:00</div>
<div class="cell fi " style="top:515px;color:#262626">14.05.2025 18:00</div>
<div class="cell pr " style="top:515px;color:#262626">100</div>
<div class="rn" style="top:537px">19</div>
<div class="stripe" style="left:67px;top:537px;background:#183762"></div>
<div class="stripe" style="left:77px;top:537px;background:#1d4a7e"></div>
<div class="stripe" style="left:87px;top:537px;background:#225a9f"></div>
<div class="row grp" style="left:97px;top:537px;width:723px;background:#2a6bbf">
<div class="dash"></div>
<div class="cb" style="left:12px"><svg width="12" height="12" viewBox="0 0 12 12"><rect x="0.7" y="0.7" width="10.6" height="10.6" rx="1.6" fill="none" stroke="#fff" stroke-width="1.3"/></svg></div>
<div class="code b" style="left:33.5px;width:60.5px">OP_syn.1.1.2.2</div>
</div>
<div class="cell nm b" style="top:537px;color:#fff">Монолитные работы подземной части</div>
<div class="cell st b" style="top:537px;color:#fff">19.05.2025 09:00</div>
<div class="cell fi b" style="top:537px;color:#fff">29.05.2025 18:00</div>
<div class="cell pr b" style="top:537px;color:#fff">100</div>
<div class="rn" style="top:559px">20</div>
<div class="stripe" style="left:67px;top:559px;background:#183762"></div>
<div class="stripe" style="left:77px;top:559px;background:#1d4a7e"></div>
<div class="stripe" style="left:87px;top:559px;background:#225a9f"></div>
<div class="stripe" style="left:97px;top:559px;background:#2a6bbf"></div>
<div class="row leaf" style="left:107px;top:559px;width:713px">
<div class="cb" style="left:2px"><svg width="12" height="12" viewBox="0 0 12 12"><rect x="0.7" y="0.7" width="10.6" height="10.6" rx="1.6" fill="none" stroke="#111" stroke-width="1.3"/></svg></div>
<div class="code" style="left:24.5px;width:59.5px">02.02.01</div>
</div>
<div class="vd" style="left:191px;top:559px"></div>
<div class="vd" style="left:487px;top:559px"></div>
<div class="vd" style="left:609px;top:559px"></div>
<div class="vd" style="left:729px;top:559px"></div>
<div class="vd" style="left:820px;top:559px"></div>
<div class="cell nm " style="top:559px;color:#262626">Устройство монолитных стен цокольного этажа</div>
<div class="cell st " style="top:559px;color:#262626">19.05.2025 09:00</div>
<div class="cell fi " style="top:559px;color:#262626">20.05.2025 18:00</div>
<div class="cell pr " style="top:559px;color:#262626">100</div>
<div class="rn" style="top:581px">21</div>
<div class="stripe" style="left:67px;top:581px;background:#183762"></div>
<div class="stripe" style="left:77px;top:581px;background:#1d4a7e"></div>
<div class="stripe" style="left:87px;top:581px;background:#225a9f"></div>
<div class="stripe" style="left:97px;top:581px;background:#2a6bbf"></div>
<div class="row leaf" style="left:107px;top:581px;width:713px">
<div class="cb" style="left:2px"><svg width="12" height="12" viewBox="0 0 12 12"><rect x="0.7" y="0.7" width="10.6" height="10.6" rx="1.6" fill="none" stroke="#111" stroke-width="1.3"/></svg></div>
<div class="code" style="left:24.5px;width:59.5px">02.02.02</div>
</div>
<div class="vd" style="left:191px;top:581px"></div>
<div class="vd" style="left:487px;top:581px"></div>
<div class="vd" style="left:609px;top:581px"></div>
<div class="vd" style="left:729px;top:581px"></div>
<div class="vd" style="left:820px;top:581px"></div>
<div class="cell nm " style="top:581px;color:#262626">Устройство монолитного перекрытия цокольного этажа</div>
<div class="cell st " style="top:581px;color:#262626">21.05.2025 09:00</div>
<div class="cell fi " style="top:581px;color:#262626">25.05.2025 18:00</div>
<div class="cell pr " style="top:581px;color:#262626">100</div>
<div class="rn" style="top:603px">22</div>
<div class="stripe" style="left:67px;top:603px;background:#183762"></div>
<div class="stripe" style="left:77px;top:603px;background:#1d4a7e"></div>
<div class="stripe" style="left:87px;top:603px;background:#225a9f"></div>
<div class="stripe" style="left:97px;top:603px;background:#2a6bbf"></div>
<div class="row leaf" style="left:107px;top:603px;width:713px">
<div class="cb" style="left:2px"><svg width="12" height="12" viewBox="0 0 12 12"><rect x="0.7" y="0.7" width="10.6" height="10.6" rx="1.6" fill="none" stroke="#111" stroke-width="1.3"/></svg></div>
<div class="code" style="left:24.5px;width:59.5px">02.02.03</div>
</div>
<div class="vd" style="left:191px;top:603px"></div>
<div class="vd" style="left:487px;top:603px"></div>
<div class="vd" style="left:609px;top:603px"></div>
<div class="vd" style="left:729px;top:603px"></div>
<div class="vd" style="left:820px;top:603px"></div>
<div class="cell nm " style="top:603px;color:#262626">Устройство монолитной входной лестницы</div>
<div class="cell st " style="top:603px;color:#262626">28.05.2025 09:00</div>
<div class="cell fi " style="top:603px;color:#262626">29.05.2025 18:00</div>
<div class="cell pr " style="top:603px;color:#262626">100</div>
<svg class="abs" style="left:0;top:0;overflow:visible" width="1" height="1"><path d="M345 239.6H400.3" stroke="#000" stroke-width="3.2"/><path d="M334 239.6L346 233.6V245.6z" fill="#000"/><ellipse cx="416.3" cy="239.6" rx="16" ry="17.3" fill="#fff" stroke="#000" stroke-width="3"/><text x="416.3" y="246.9" text-anchor="middle" font-family="Liberation Sans" font-size="20.5" fill="#000">1</text></svg>
<svg class="abs" style="left:0;top:0;overflow:visible" width="1" height="1"><path d="M484 307.8H539.3" stroke="#000" stroke-width="3.2"/><path d="M473 307.8L485 301.8V313.8z" fill="#000"/><ellipse cx="555.3" cy="307.8" rx="16" ry="17.3" fill="#fff" stroke="#000" stroke-width="3"/><text x="555.3" y="315.1" text-anchor="middle" font-family="Liberation Sans" font-size="20.5" fill="#000">2</text></svg>
<div id="split-v"></div>
<div id="rbody"></div>

<div id="rtb"></div>
<div class="abs box" style="left:843.5px;top:50px;width:195px;height:36px;background:#fff"></div>
<div class="t abs" style="left:856px;top:59px;font-size:15px;letter-spacing:0.2px">ИИ декомпозиция...</div>
<svg class="abs" style="left:1009px;top:65.5px" width="10" height="6" viewBox="0 0 10 6"><path d="M0 0h10L5 5.5z" fill="#46474e"/></svg>
<div class="abs box" style="left:1257px;top:48px;width:290px;height:40px;background:transparent"></div>
<div class="t abs lbl" style="left:1269px;top:51px">Выберите AI модель</div>
<div class="t abs" style="left:1269px;top:66px;font-size:14.5px">DeepSeek</div>
<svg class="abs" style="left:1518px;top:65.5px" width="10" height="6" viewBox="0 0 10 6"><path d="M0 0h10L5 5.5z" fill="#46474e"/></svg>
<div class="abs box" style="left:1555px;top:48px;width:217px;height:40px;background:transparent"></div>
<div class="t abs lbl" style="left:1567px;top:51px">Создать работ:</div>
<div class="t abs" style="left:1567px;top:66px;font-size:14.5px">5</div>
<div class="abs btn" style="left:1781px;top:52px;width:132px;height:32px;line-height:32px;font-size:15px">Декомпозировать</div>
<div class="badge" style="left:843.5px;top:96px;width:38px;height:16px;font-size:13px;line-height:16px">ИСР</div>
<div class="t abs" style="left:886px;top:95px;font-size:14px;letter-spacing:0.5px">Отель Речной / Строительство отеля / Земляные работы / Устройство котлована</div>
<div class="abs box" style="left:843.5px;top:126px;width:1073px;height:40px;background:#fff"></div>
<div class="t abs lbl" style="left:856px;top:129px">Ограничения</div>
<div class="t abs" style="left:856px;top:144px;font-size:14px;letter-spacing:0.68px">Сосредоточиться на этапах проектирования</div>
<svg class="abs" style="left:1891px;top:153px" width="10" height="10" viewBox="0 0 10 10"><path d="M1 9L9 1M5 9l4-4M6.5 9h3" stroke="#46474e" stroke-width="1.2" fill="none"/></svg>
<div class="t abs" style="left:1222px;top:356px;font-size:21px;line-height:20px;color:#6f6f74;letter-spacing:0.54px">Результат декомпозиции работ</div>
<div class="abs btn" style="left:1664px;top:577px;width:241px;height:32px;line-height:32px;font-size:14.8px;background:#5b9fe1">Согласовать и внести в график</div>

<div id="split-h"></div>

<div id="bot"></div>
<div class="tab act" style="left:92.3px;letter-spacing:0.8px">Карточка работы</div><div class="tab " style="left:323.3px;letter-spacing:0.66px">Связи работы</div><div class="tab " style="left:529.8px;letter-spacing:0.7px">Связанные графики</div><div class="tab dis" style="left:785px;letter-spacing:0.98px">Справочники</div><div class="tab dis" style="left:987.5px;letter-spacing:0.73px">Суточное планирование</div><div class="tab " style="left:1278.2px;letter-spacing:0.93px">Фото / Документация</div><div class="tab " style="left:1547.4px;letter-spacing:0.74px">Запросы и поручения</div><div class="tab " style="left:1817.2px;letter-spacing:0.2px">Табели</div>
<div class="abs" style="left:45px;top:673px;width:232px;height:2px;background:#1f7be0"></div>
<div class="t abs b" style="left:61px;top:695px;font-size:14px;letter-spacing:-0.1px">Тип</div>
<div class="t abs b" style="left:61px;top:725px;font-size:14px;letter-spacing:-0.1px">Шифр</div>
<div class="t abs b" style="left:61px;top:755.5px;font-size:14px;letter-spacing:-0.1px">Статус</div>
<div class="abs inp " style="left:121px;top:691px;width:162px;height:22px;line-height:21px;"><div style="overflow:hidden;width:138px">Узел ИСР</div></div><svg class="abs" style="left:254px;top:699px" width="10" height="6" viewBox="0 0 10 6"><path d="M0 0h10L5 5.5z" fill="#46474e"/></svg>
<div class="abs inp " style="left:121px;top:721px;width:162px;height:22px;line-height:21px;"><div style="overflow:hidden;width:138px">01.02</div></div>
<div class="abs inp " style="left:121px;top:751px;width:162px;height:22px;line-height:21px;"><div style="overflow:hidden;width:138px">Не начата</div></div><svg class="abs" style="left:254px;top:759px" width="10" height="6" viewBox="0 0 10 6"><path d="M0 0h10L5 5.5z" fill="#46474e"/></svg>
<div class="abs box" style="left:291px;top:691px;width:530px;height:50px"></div>
<div class="t abs b" style="left:304px;top:706px;font-size:17.5px;letter-spacing:0.3px">Устройство котлована</div>
<div class="t abs" style="left:291px;top:753px;font-size:14px;letter-spacing:0.3px">Сценарий</div>
<div class="abs" style="left:364px;top:749px;width:456px;height:22px;background:#f0f0f2;border-radius:4px"></div>
<div class="t abs" style="left:364px;top:752px;width:322px;text-align:center;font-size:13px;letter-spacing:0.2px">Сценария нет</div>
<svg class="abs" style="left:799px;top:752px" width="16" height="16" viewBox="0 0 16 16"><path d="M14.75 8.00 L14.64 8.43 L14.32 8.83 L13.88 9.17 L13.43 9.46 L13.07 9.72 L12.85 10.01 L12.80 10.37 L12.87 10.81 L12.99 11.33 L13.06 11.88 L13.00 12.38 L12.77 12.77 L12.38 13.00 L11.88 13.06 L11.33 12.99 L10.81 12.87 L10.37 12.80 L10.01 12.85 L9.72 13.07 L9.46 13.43 L9.17 13.88 L8.83 14.32 L8.43 14.64 L8.00 14.75 L7.57 14.64 L7.17 14.32 L6.83 13.88 L6.54 13.43 L6.28 13.07 L5.99 12.85 L5.63 12.80 L5.19 12.87 L4.67 12.99 L4.12 13.06 L3.62 13.00 L3.23 12.77 L3.00 12.38 L2.94 11.88 L3.01 11.33 L3.13 10.81 L3.20 10.37 L3.15 10.01 L2.93 9.72 L2.57 9.46 L2.12 9.17 L1.68 8.83 L1.36 8.43 L1.25 8.00 L1.36 7.57 L1.68 7.17 L2.12 6.83 L2.57 6.54 L2.93 6.28 L3.15 5.99 L3.20 5.63 L3.13 5.19 L3.01 4.67 L2.94 4.12 L3.00 3.62 L3.23 3.23 L3.62 3.00 L4.12 2.94 L4.67 3.01 L5.19 3.13 L5.63 3.20 L5.99 3.15 L6.28 2.93 L6.54 2.57 L6.83 2.12 L7.17 1.68 L7.57 1.36 L8.00 1.25 L8.43 1.36 L8.83 1.68 L9.17 2.12 L9.46 2.57 L9.72 2.93 L10.01 3.15 L10.37 3.20 L10.81 3.13 L11.33 3.01 L11.88 2.94 L12.38 3.00 L12.77 3.23 L13.00 3.62 L13.06 4.12 L12.99 4.67 L12.87 5.19 L12.80 5.63 L12.85 5.99 L13.07 6.28 L13.43 6.54 L13.88 6.83 L14.32 7.17 L14.64 7.57 L14.75 8.00z" fill="none" stroke="#c4c4c8" stroke-width="1.2"/><path d="M5.5 5.5l2.5 2.5-2.5 2.5M8.5 5.5l2.5 2.5-2.5 2.5" fill="none" stroke="#c4c4c8" stroke-width="1.1"/></svg>
<div class="abs" style="left:828.5px;top:691px;width:146px;height:82px;border:1.5px solid #5e9de0;border-radius:5px;background:#fff;overflow:hidden"><div style="height:33.5px;background:#5e9de0"></div></div>
<div class="abs" style="left:860px;top:683px;width:9px;height:15px;background:#fff;border:1.5px solid #5e9de0;border-radius:3px"></div>
<div class="abs" style="left:933px;top:683px;width:9px;height:15px;background:#fff;border:1.5px solid #5e9de0;border-radius:3px"></div>
<div class="t abs" style="left:828px;top:701px;width:146px;text-align:center;font-size:13px;color:#fff;text-decoration:underline;letter-spacing:0.2px">PLAN-R: 7 дней</div>
<div class="t abs" style="left:828px;top:743px;width:146px;text-align:center;font-size:12px;letter-spacing:0.45px">Календарных: 4 дн.</div>
<div class="abs" style="left:53px;top:781px;width:921px;height:24px;background:#a0a0a0;border-radius:2px"></div>
<div class="t abs" style="left:72px;top:785px;font-size:14px;color:#fff;letter-spacing:1.05px">02.05.2025 10:00</div>
<div class="t abs" style="left:417px;top:785px;width:200px;text-align:center;font-size:14px;color:#fff;letter-spacing:0.3px">100 %</div>
<div class="t abs" style="left:819px;top:785px;font-size:14px;color:#fff;letter-spacing:1.05px">05.05.2025 18:00</div>
<div class="t abs b" style="left:53px;top:823px;font-size:13.5px;letter-spacing:0.25px">Физобъем</div>
<div class="abs" style="left:206px;top:828px;width:768px;height:3px;background:#b4b4ba"></div>
<div class="t abs" style="left:101px;top:848px;font-size:14px;letter-spacing:0.3px">Код</div>
<div class="t abs" style="left:246px;top:848px;font-size:14px;letter-spacing:0.3px">Наименование</div>
<div class="t abs" style="left:400px;top:848px;font-size:14px;letter-spacing:0.3px">Ед. измерения</div>
<div class="t abs" style="left:516px;top:848px;font-size:14px;letter-spacing:0.3px">Расценка</div>
<div class="t abs" style="left:633px;top:848px;font-size:14px;letter-spacing:0.3px">Интенсивность</div>
<div class="t abs" style="left:749px;top:848px;font-size:14px;letter-spacing:0.3px">Уд. трудозатр...</div>
<div class="t abs" style="left:865px;top:848px;font-size:14px;letter-spacing:0.3px">Численность ...</div>
<div class="abs btn" style="left:53px;top:869px;width:40px;height:20px;border-radius:4px"></div>
<svg class="abs" style="left:64px;top:870px" width="18" height="18" viewBox="0 0 18 18"><path d="M6.5 2.5C4 4.5 3.8 9.5 5.8 12.5M10.5 4C13 6 13.2 11 11.2 14" fill="none" stroke="#fff" stroke-width="1.5" stroke-linecap="round"/><path d="M3.5 12.8h3.8v-3.3zM13.5 3.8H9.7v3.3z" fill="#fff"/></svg>
<div class="abs inp gr" style="left:101px;top:867px;width:137px;height:22px;line-height:21px;"><div style="overflow:hidden;width:113px">00002</div></div>
<div class="abs inp gr" style="left:246px;top:867px;width:146px;height:22px;line-height:21px;"><div style="overflow:hidden;width:122px">Разработка г...</div></div>
<div class="abs inp gr" style="left:400px;top:867px;width:108px;height:22px;line-height:21px;"><div style="overflow:hidden;width:84px">м3</div></div>
<div class="abs inp " style="left:516px;top:867px;width:109px;height:22px;line-height:21px;overflow:hidden"><div style="overflow:hidden;width:85px">40,82266666</div></div>
<div class="abs inp gr" style="left:633px;top:867px;width:108px;height:22px;line-height:21px;"><div style="overflow:hidden;width:84px">166,67</div></div>
<div class="abs inp " style="left:749px;top:867px;width:108px;height:22px;line-height:21px;"><div style="overflow:hidden;width:84px">0,01</div></div>
<div class="abs inp " style="left:865px;top:867px;width:109px;height:22px;line-height:21px;"><div style="overflow:hidden;width:85px">1</div></div>
<svg class="abs" style="left:212px;top:872px" width="13" height="12" viewBox="0 0 13 12"><rect x="3" y="3" width="9" height="8.5" rx="1" fill="none" stroke="#9a9aa0" stroke-width="1"/><path d="M1 8.5V1.5a1 1 0 0 1 1-1h7M5 6h6M5 8.5h6M7.5 4v7" fill="none" stroke="#9a9aa0" stroke-width="1"/></svg>
<svg class="abs" style="left:366px;top:871px" width="14" height="14" viewBox="0 0 14 14"><rect x="4" y="4" width="9" height="9" rx="1" fill="none" stroke="#9a9aa0" stroke-width="1.1"/><path d="M1.5 10V2.5a1 1 0 0 1 1-1h7M6.5 7h5M7.5 7v6M10 7v6" fill="none" stroke="#9a9aa0" stroke-width="1.1"/></svg>
<svg class="abs" style="left:482px;top:871px" width="14" height="14" viewBox="0 0 14 14"><rect x="4" y="4" width="9" height="9" rx="1" fill="none" stroke="#9a9aa0" stroke-width="1.1"/><path d="M1.5 10V2.5a1 1 0 0 1 1-1h7M6.5 7h5M7.5 7v6M10 7v6" fill="none" stroke="#9a9aa0" stroke-width="1.1"/></svg>
<div class="abs" style="left:983px;top:683px;width:2px;height:229px;background:#c8c8cc"></div>
<div class="t abs b" style="left:991px;top:703px;font-size:13.5px">Атрибуты</div>
<div class="abs box" style="left:1081px;top:691px;width:832px;height:40px"></div>
<div class="t abs" style="left:1093px;top:703px;font-size:14px;color:#8a8a90">Поиск</div>
<div class="t abs" style="left:991px;top:753px;font-size:14px;letter-spacing:0.4px">Шифр</div>
<div class="t abs" style="left:1457px;top:752px;font-size:14px;letter-spacing:0.25px">01.02</div>
<div class="abs hl" style="top:781px"></div>
<div class="t abs" style="left:991px;top:795px;font-size:14px;letter-spacing:0.4px">Наименование</div>
<div class="t abs" style="left:1457px;top:795px;font-size:14px;letter-spacing:0.67px">Устройство котлована</div>
<div class="abs hl" style="top:823px"></div>
<div class="t abs" style="left:991px;top:837px;font-size:14px;letter-spacing:0.4px">Старт</div>
<div class="t abs" style="left:1457px;top:837px;font-size:14px;letter-spacing:0.49px">02.05.2025 10:00</div>
<div class="abs hl" style="top:865px"></div>
<div class="t abs" style="left:991px;top:879px;font-size:14px;letter-spacing:0.4px">Финиш</div>
<div class="t abs" style="left:1457px;top:879px;font-size:14px;letter-spacing:0.49px">05.05.2025 18:00</div>
<div class="abs hl" style="top:907px"></div>

<svg class="abs" style="left:0;top:0;overflow:visible" width="1" height="1"><path d="M281 703.3H336.3" stroke="#000" stroke-width="3.2"/><path d="M270 703.3L282 697.3V709.3z" fill="#000"/><ellipse cx="352.3" cy="703.3" rx="16" ry="17.3" fill="#fff" stroke="#000" stroke-width="3"/><text x="352.3" y="710.5999999999999" text-anchor="middle" font-family="Liberation Sans" font-size="20.5" fill="#000">1</text></svg>
</body></html>
